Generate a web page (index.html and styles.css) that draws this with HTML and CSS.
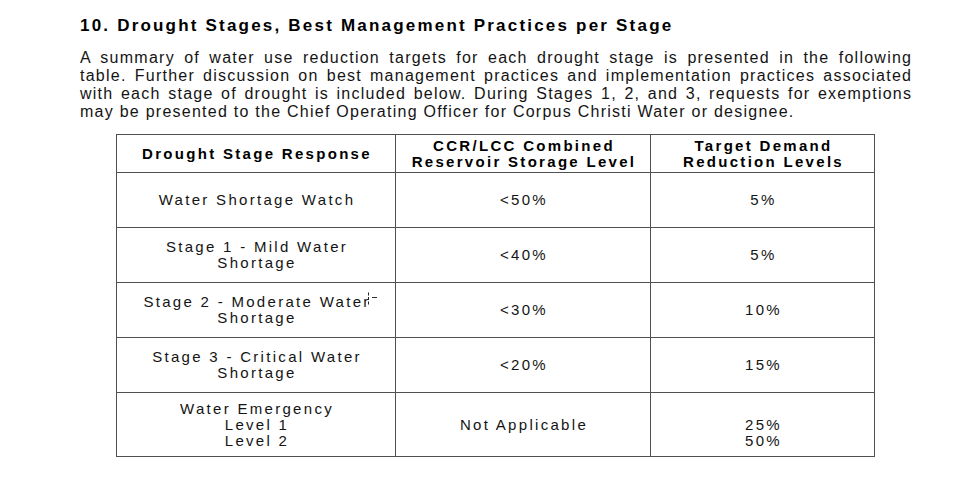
FILE: index.html
```html
<!DOCTYPE html>
<html>
<head>
<meta charset="utf-8">
<link rel="stylesheet" href="styles.css">
</head>
<body>
<div class="page">
  <h1 class="title">10. Drought Stages, Best Management Practices per Stage</h1>
  <p class="intro">
    <span class="jl">A summary of water use reduction targets for each drought stage is presented in the following</span>
    <span class="jl">table. Further discussion on best management practices and implementation practices associated</span>
    <span class="jl">with each stage of drought is included below. During Stages 1, 2, and 3, requests for exemptions</span>
    <span class="ll">may be presented to the Chief Operating Officer for Corpus Christi Water or designee.</span>
  </p>
  <table class="stages">
    <thead>
      <tr class="head-row">
        <th class="col-a">Drought Stage Response</th>
        <th class="col-b">CCR/LCC Combined<br>Reservoir Storage Level</th>
        <th class="col-c">Target Demand<br>Reduction Levels</th>
      </tr>
    </thead>
    <tbody>
      <tr class="row">
        <td>Water Shortage Watch</td>
        <td>&lt;50%</td>
        <td>5%</td>
      </tr>
      <tr class="row">
        <td>Stage 1 - Mild Water<br>Shortage</td>
        <td>&lt;40%</td>
        <td>5%</td>
      </tr>
      <tr class="row">
        <td>Stage 2 - Moderate Water<br>Shortage</td>
        <td>&lt;30%</td>
        <td>10%</td>
      </tr>
      <tr class="row">
        <td>Stage 3 - Critical Water<br>Shortage</td>
        <td>&lt;20%</td>
        <td>15%</td>
      </tr>
      <tr class="row last">
        <td>Water Emergency<br>Level 1<br>Level 2</td>
        <td>Not Applicable</td>
        <td>&nbsp;<br>25%<br>50%</td>
      </tr>
    </tbody>
  </table>
  <svg class="cursor" width="12" height="14" viewBox="0 0 12 14">
    <path d="M1.5 0.5V3.5M1.5 5V8M1.5 9.5V12.5" stroke="#222" stroke-width="1"/>
    <path d="M5 5.5H10" stroke="#333" stroke-width="1"/>
  </svg>
</div>
</body>
</html>
```
FILE: styles.css
```css
html, body {
  margin: 0;
  padding: 0;
  background: #ffffff;
}
.page {
  position: relative;
  width: 956px;
  height: 478px;
  font-family: "Liberation Sans", Arial, sans-serif;
  color: #141414;
  overflow: hidden;
}
.title {
  margin: 0;
  padding: 16px 0 0 80px;
  font-size: 17px;
  line-height: 20px;
  font-weight: bold;
  letter-spacing: 2.2px;
  color: #000;
}
.intro {
  margin: 13px 0 0 80px;
  width: 831px;
  font-size: 16px;
  line-height: 18px;
  letter-spacing: 1.25px;
}
.jl {
  display: block;
  text-align: justify;
  text-align-last: justify;
  margin-right: -1.25px;
}
.ll {
  display: block;
}
.stages {
  margin: 13px 0 0 116px;
  width: 758px;
  border-collapse: collapse;
  table-layout: fixed;
  font-size: 15px;
  line-height: 16px;
  letter-spacing: 2.3px;
}
.stages th, .stages td {
  box-sizing: border-box;
  border: 1px solid #505050;
  text-align: center;
  vertical-align: middle;
  padding: 0 0 0 2px;
}
.stages th {
  font-weight: bold;
  color: #000;
  height: 38px;
}
.col-a { width: 279px; }
.col-b { width: 255px; }
.col-c { width: 224px; }
.row td { height: 55px; }
.row.last td { height: 64px; }
.cursor {
  position: absolute;
  left: 367px;
  top: 292px;
}
```
